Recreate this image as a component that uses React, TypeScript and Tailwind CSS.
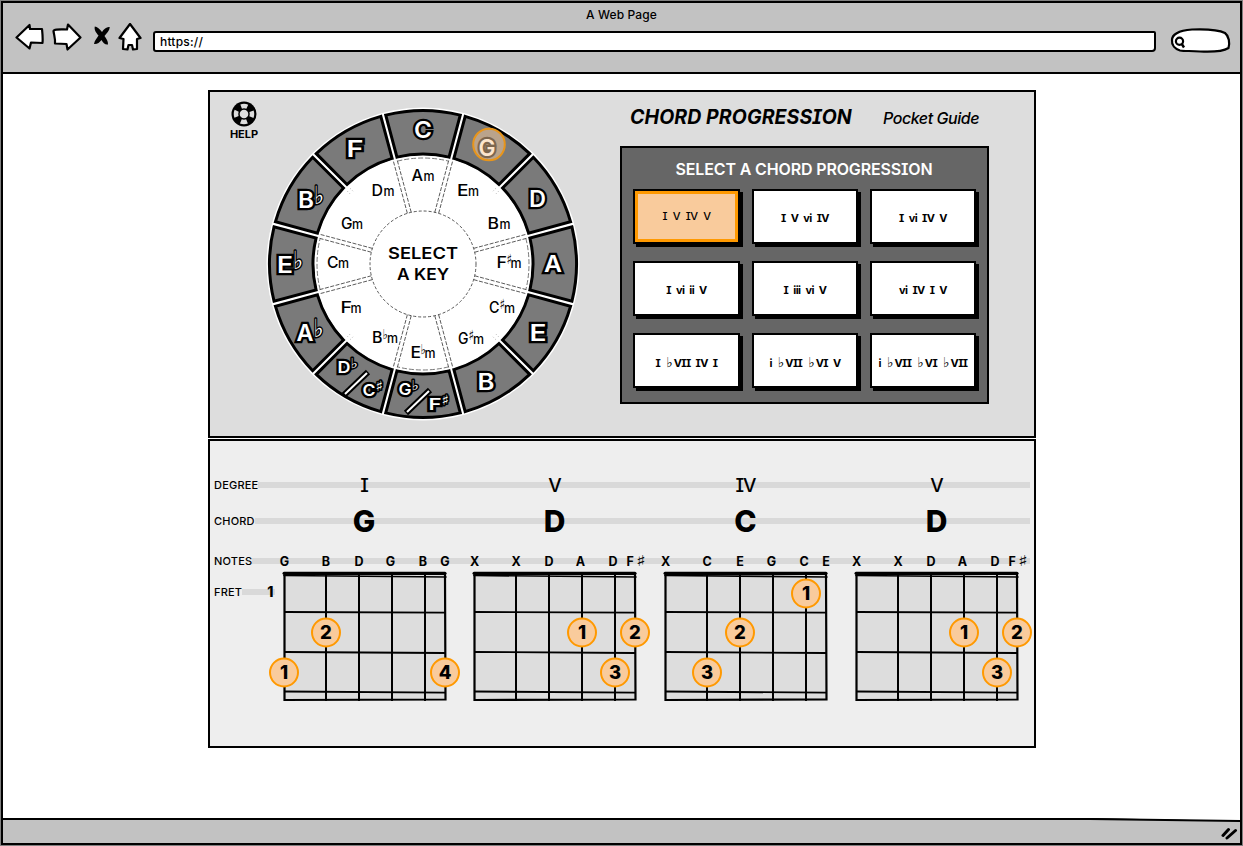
import React from "react";

const FONT = "font-['Inter','DejaVu_Sans',sans-serif] [font-feature-settings:'cv08']";

const progressions = [
  "I  V  IV  V",
  "I  V  vi  IV",
  "I  vi  IV  V",
  "I  vi  ii  V",
  "I  iii  vi  V",
  "vi  IV  I  V",
  "I  ♭VII  IV  I",
  "i  ♭VII  ♭VI  V",
  "i  ♭VII  ♭VI  ♭VII",
];

type Dot = { s: number; f: number; n: string };
type Chord = { degree: string; name: string; notes: string[]; dots: Dot[] };

const chords: Chord[] = [
  {
    degree: "I",
    name: "G",
    notes: ["G", "B", "D", "G", "B", "G"],
    dots: [
      { s: 1, f: 1, n: "2" },
      { s: 0, f: 2, n: "1" },
      { s: 5, f: 2, n: "4" },
    ],
  },
  {
    degree: "V",
    name: "D",
    notes: ["X", "X", "D", "A", "D", "F♯"],
    dots: [
      { s: 3, f: 1, n: "1" },
      { s: 5, f: 1, n: "2" },
      { s: 4, f: 2, n: "3" },
    ],
  },
  {
    degree: "IV",
    name: "C",
    notes: ["X", "C", "E", "G", "C", "E"],
    dots: [
      { s: 4, f: 0, n: "1" },
      { s: 2, f: 1, n: "2" },
      { s: 1, f: 2, n: "3" },
    ],
  },
  {
    degree: "V",
    name: "D",
    notes: ["X", "X", "D", "A", "D", "F♯"],
    dots: [
      { s: 3, f: 1, n: "1" },
      { s: 5, f: 1, n: "2" },
      { s: 4, f: 2, n: "3" },
    ],
  },
];

const strings = [0, 42, 75, 108, 141, 161];
const noteX = [0.5, 42, 75, 106.5, 139, 161];
const dotY = [21, 60, 100];

/* ---------- browser chrome ---------- */

function BrowserBar() {
  return (
    <header className="flex h-[71px] shrink-0 flex-col border-b-2 border-black bg-[#c2c2c2]">
      <div className="flex h-[20px] items-end justify-center pb-px text-[12px] font-medium leading-[15px]">
        <span className="tracking-[0.120px]">A Web Page</span>
      </div>
      <div className="flex h-[30px] pl-[12px]">
        <svg width="132" height="30" viewBox="15 23 132 30" className="shrink-0" fill="white" stroke="black" strokeWidth="2.200" strokeLinejoin="round">
          <path d="M16.500 37.500 L29.500 25 L30 29 L42 29 C42.500 34 43 38 42.500 43 L31 42.500 L29.500 48.500 Z" />
          <path d="M53.500 31 C54 29 60 29.500 67 29.500 L68 24.500 L80.500 37.500 L67.500 49.500 L66.500 44 L55 43.500 C55.500 39 54 35 53.500 31 Z" />
          <path
            d="M94.800 26.500 C97 26.500 100 29 102 32 C104 29 107 26.500 109.800 27.200 C109.500 30.500 106.500 33.500 104.500 36 C106.300 38.500 108.200 41 108 44.500 C105 45 103 42.500 101.500 40 C99.500 42.500 97 44.500 94 44 C94.500 40.500 97 38 98.500 35.500 C96 32.500 94 30 94.800 26.500 Z"
            fill="black"
            stroke="none"
          />
          <path d="M130 24 L140.500 38 L137 39 L137 49 L133 49.500 L132 45 L128.500 45 L127.500 49.500 L123 49 L123.500 39 L119.500 38 Z" />
        </svg>
        <div className="ml-[6px] mt-[8px] flex h-[21px] w-[1003px] shrink-0 items-center rounded-[3px_2px_4px_3px] border-2 border-black bg-white pl-[5px] text-[12px] font-medium leading-none tracking-[0.2px]">
          https://
        </div>
        <svg width="62" height="28" viewBox="1169 26 62 28" className="ml-[13px] mt-[3px] shrink-0" fill="white" stroke="black" strokeWidth="2.200">
          <path d="M1172 40 C1172 35 1178 30.500 1192 29.500 C1205 29 1218 29.500 1225 33 C1229 36 1230 43 1228.500 48 C1222 52 1210 52 1200 51.500 C1192 50.500 1185 51.500 1180 50.500 C1175 49 1171.500 45 1172 40 Z" />
          <circle cx="1179.500" cy="41.200" r="3.600" />
          <path d="M1181.500 43.500 L1184 47.500" strokeWidth="2.400" />
        </svg>
      </div>
    </header>
  );
}

function StatusBar() {
  return (
    <footer className="relative flex h-[25px] shrink-0 items-center justify-end border-t-2 border-black bg-[#c2c2c2] pr-[2px]">
      <svg className="absolute -top-[2px] right-0" width="150" height="6" viewBox="0 0 150 6">
        <path d="M0 0 H150 V3 L0 0 Z" fill="white" />
        <path d="M0 1 L150 3" stroke="black" strokeWidth="2" />
      </svg>
      <svg width="18" height="16" viewBox="0 0 18 16" stroke="black" strokeWidth="3" strokeLinecap="round">
        <path d="M3 11.500 L8.500 5.500 M7 14 L15.500 6.500" />
      </svg>
    </footer>
  );
}

/* ---------- key wheel ---------- */

const pt = (r: number, deg: number): [number, number] => {
  const a = (deg * Math.PI) / 180;
  return [r * Math.sin(a), -r * Math.cos(a)];
};

const segment = (mid: number) => {
  const gapOut = 0.95;
  const gapIn = 1.3;
  const [ax, ay] = pt(153.5, mid - 15 + gapOut);
  const [bx, by] = pt(153.5, mid + 15 - gapOut);
  const [cx, cy] = pt(110, mid + 15 - gapIn);
  const [dx, dy] = pt(110, mid - 15 + gapIn);
  return `M${ax} ${ay} A153.5 153.5 0 0 1 ${bx} ${by} L${cx} ${cy} A110 110 0 0 0 ${dx} ${dy} Z`;
};

type Label = { t: string; x: number; y: number; w: number; acc?: string; size?: number };

const majors: Label[] = [
  { t: "C", x: 0, y: -134, w: 20 },
  { t: "G", x: 64, y: -116, w: 19 },
  { t: "D", x: 114.500, y: -65, w: 19 },
  { t: "A", x: 130, y: 0, w: 20 },
  { t: "E", x: 115, y: 69, w: 19 },
  { t: "B", x: 63, y: 118, w: 19 },
  { t: "G", x: -18, y: 125, w: 15, acc: "♭", size: 16.5 },
  { t: "F", x: 12, y: 140, w: 15, acc: "♯", size: 16.5 },
  { t: "D", x: -79, y: 103, w: 15, acc: "♭", size: 16.5 },
  { t: "C", x: -54, y: 126, w: 15, acc: "♯", size: 16.5 },
  { t: "A", x: -118, y: 69, w: 19, acc: "♭" },
  { t: "E", x: -138, y: 1, w: 18, acc: "♭" },
  { t: "B", x: -117, y: -64, w: 18, acc: "♭" },
  { t: "F", x: -68, y: -115, w: 19 },
];

const minors: Label[] = [
  { t: "A", x: 0, y: -88, w: 23 },
  { t: "E", x: 45, y: -73, w: 22 },
  { t: "B", x: 76, y: -40, w: 23 },
  { t: "F", x: 86, y: -1, w: 25, acc: "♯" },
  { t: "C", x: 79, y: 44, w: 26, acc: "♯" },
  { t: "G", x: 48, y: 75, w: 26, acc: "♯" },
  { t: "E", x: 0, y: 89, w: 25, acc: "♭" },
  { t: "B", x: -38, y: 74, w: 26, acc: "♭" },
  { t: "F", x: -72, y: 44, w: 21 },
  { t: "C", x: -85, y: -1, w: 22 },
  { t: "G", x: -71, y: -40, w: 22 },
  { t: "D", x: -40, y: -73, w: 23 },
];

function KeyWheel() {
  const mids = Array.from({ length: 12 }, (_, i) => i * 30);
  const spokes = [15, 75, 105, 165, 195, 255, 285, 345];
  return (
    <svg width="314" height="314" viewBox="-157 -157 314 314" className="shrink-0 overflow-visible">
      <circle r="156.500" fill="white" />
      {mids.map((m) => (
        <path key={m} d={segment(m)} fill="#7a7a7a" stroke="black" strokeWidth="3" />
      ))}
      <circle r="108" fill="white" />
      {[0, 90, 180, 270].map((m) => {
        const [ax, ay] = pt(106, m - 14);
        const [bx, by] = pt(106, m + 14);
        return <path key={m} d={`M${ax} ${ay} A106 106 0 0 1 ${bx} ${by}`} fill="none" stroke="#555" strokeWidth="0.800" strokeDasharray="5 2" />;
      })}
      <circle r="53" fill="none" stroke="#444" strokeWidth="0.900" strokeDasharray="3 2" />
      {spokes.map((s) => (
        <g key={s} transform={`rotate(${s})`} stroke="#444" strokeWidth="0.800" strokeDasharray="4 1.500">
          <path d="M-2 -53 V-107 M2 -53 V-107" />
        </g>
      ))}
      {[45, 135, 225, 315].map((s) => (
        <g key={s} transform={`rotate(${s})`} stroke="#999" strokeWidth="0.700" strokeDasharray="1 2">
          <path d="M-2 -101 V-107 M2 -101 V-107" />
        </g>
      ))}
      <g strokeLinecap="butt">
        <path d="M-79 131 L-55 108" stroke="black" strokeWidth="6" />
        <path d="M-78 130 L-56 109" stroke="white" strokeWidth="2" />
        <path d="M-17 149 L7 126" stroke="black" strokeWidth="6" />
        <path d="M-16 148 L6 127" stroke="white" strokeWidth="2" />
      </g>
      <g fontFamily="Inter, 'DejaVu Sans', sans-serif" fontWeight="600" fill="white" stroke="black" strokeWidth="4.500" strokeLinejoin="miter" paintOrder="stroke">
        {majors.map((l, i) => (
          <g key={i}>
            <text x={l.x - l.w / 2 + 1} y={l.y + (l.size ?? 23) * 0.36} fontSize={l.size ?? 23} textLength={l.w - 2} lengthAdjust="spacingAndGlyphs">
              {l.t}
            </text>
            {l.acc && (
              <text
                x={l.x + l.w / 2 - 1}
                y={l.y + (l.size ? 1 : 4)}
                fontFamily="'DejaVu Sans'"
                fontWeight="700"
                fontSize={l.size ? 14 : 25}
                textLength={l.size ? 7.5 : 10}
                lengthAdjust="spacingAndGlyphs"
                strokeWidth="3"
              >
                {l.acc}
              </text>
            )}
          </g>
        ))}
      </g>
      <g fontFamily="Inter, 'DejaVu Sans', sans-serif" fontWeight="500" fill="black">
        {minors.map((l, i) => (
          <g key={i}>
            <text x={l.x - l.w / 2} y={l.y + 5} fontSize="15.500" textLength={l.acc ? 10.500 : 11.500} lengthAdjust="spacingAndGlyphs">
              {l.t}
            </text>
            {l.acc && (
              <text x={l.x - 2.500} y={l.y + 1} fontFamily="'DejaVu Sans'" fontSize="14" textLength="5.500" lengthAdjust="spacingAndGlyphs">
                {l.acc}
              </text>
            )}
            <text x={l.x + l.w / 2 - 11} y={l.y + 5} fontSize="13" textLength="11" lengthAdjust="spacingAndGlyphs">
              m
            </text>
          </g>
        ))}
        <text x="-35" y="-5.500" fontSize="15.500" fontWeight="600" textLength="70" lengthAdjust="spacingAndGlyphs">SELECT</text>
        <text x="-26" y="16" fontSize="15.500" fontWeight="600" textLength="52" lengthAdjust="spacingAndGlyphs">A KEY</text>
      </g>
      <circle cx="66" cy="-119.500" r="15.800" fill="#f9cb9c" fillOpacity="0.500" stroke="#e8951a" strokeWidth="2" />
    </svg>
  );
}

function Help() {
  return (
    <div className="flex w-[34px] shrink-0 flex-col items-center pt-[9px]">
      <svg width="26" height="26" viewBox="-13 -13 26 26">
        <circle r="12.500" fill="black" />
        <circle r="8" fill="none" stroke="#ddd" strokeWidth="4.500" strokeDasharray="6.283 6.283" strokeDashoffset="3.142" />
        <circle r="4.300" fill="#ddd" />
      </svg>
      <div className="text-[11px] font-bold leading-[14px]">HELP</div>
    </div>
  );
}

function Progression({ text }: { text: string }) {
  return (
    <span className="whitespace-pre [word-spacing:0.500px]">
      {text.split("♭").map((part, i) => (
        <React.Fragment key={i}>
          {i > 0 && <span className="ml-px mr-[1.500px] font-['DejaVu_Sans'] text-[14px] font-normal leading-none">♭</span>}
          {part}
        </React.Fragment>
      ))}
    </span>
  );
}

function ProgressionPicker() {
  return (
    <div className="flex h-[258px] w-[369px] flex-col border-2 border-black bg-[#666] pl-[11px]">
      <div className="flex h-[41px] items-center pr-[12px]">
        <h2 className="w-full whitespace-nowrap text-center text-[16px] font-semibold leading-none tracking-[-0.150px] text-white">
          SELECT A CHORD PROGRESSION
        </h2>
      </div>
      <div className="grid grid-cols-[107px_106px_106px] gap-x-[12px] gap-y-[17px]">
        {progressions.map((p, i) =>
          i === 0 ? (
            <button key={i} className="h-[55px] border-2 border-black bg-black text-[11px] shadow-[3px_3px_0_black]">
              <span className="flex h-full items-center justify-center border-[3px] border-[#ff9900] bg-[#f9cb9c] pb-px font-medium tracking-[-0.550px]">
                <Progression text={p} />
              </span>
            </button>
          ) : (
            <button
              key={i}
              className="flex h-[55px] items-center justify-center border-2 border-black bg-white pt-[3px] text-[11px] font-bold leading-none tracking-[-0.600px] shadow-[3px_3px_0_black]"
            >
              <Progression text={p} />
            </button>
          ),
        )}
      </div>
    </div>
  );
}

/* ---------- chord charts ---------- */

function Row({ label, className, children }: { label: string; className: string; children: React.ReactNode }) {
  return (
    <div className={`relative flex items-center pl-[4px] ${className}`}>
      <div className="absolute left-[4px] right-[4px] h-[6px] bg-[#d9d9d9]" />
      <div className="relative w-[55px] shrink-0 text-[11px] font-medium leading-none tracking-[0.200px]">
        <span className="bg-[#eee]">{label}</span>
      </div>
      <div className="relative grid shrink-0 grid-cols-[190px_191px_191px_191px]">{children}</div>
    </div>
  );
}

function Note({ note, x }: { note: string; x: number }) {
  if (note.length === 1) {
    return (
      <text x={x} y="15.500" textAnchor="middle">
        {note}
      </text>
    );
  }
  return (
    <>
      <text x={x - 8.5} y="15.500">
        {note[0]}
      </text>
      <text x={x + 1} y="15.500" fontFamily="'DejaVu Sans'" fontWeight="400" fontSize="15" textLength="10" lengthAdjust="spacingAndGlyphs">
        {note[1]}
      </text>
    </>
  );
}

function Fretboard({ dots }: { dots: Dot[] }) {
  return (
    <svg width="161" height="130" viewBox="0 0 161 130" className="overflow-visible" stroke="black" strokeLinecap="round">
      <path d="M0.500 2 L161 2 L161.500 127.500 L0.500 128 Z" fill="#ddd" strokeWidth="2.200" />
      <path d="M0 1.300 L161 1.300" strokeWidth="3" />
      <path d="M0 3.500 L162 5" strokeWidth="1.600" />
      <path d="M1 40 L161 40.700 M1 80 L161 81 M1 119.500 L161 120.700" strokeWidth="1.800" />
      {strings.slice(1, 5).map((x) => (
        <path key={x} d={`M${x} 0.500 V129`} strokeWidth="2" strokeLinecap="butt" />
      ))}
      {dots.map((d) => (
        <g key={`${d.s}-${d.f}`}>
          <circle cx={strings[d.s]} cy={dotY[d.f] + 0.500} r="14" fill="#f9cb9c" stroke="#ff9900" strokeWidth="2" />
          <text x={strings[d.s]} y={dotY[d.f] + 7} textAnchor="middle" fontSize="18.500" fontWeight="800" stroke="none" fill="black">
            {d.n}
          </text>
        </g>
      ))}
    </svg>
  );
}

function ChordCharts() {
  return (
    <section className="mt-px flex h-[309px] w-[828px] flex-col border-2 border-black bg-[#eee] pt-[29px]">
      <Row label="DEGREE" className="h-[30px]">
        {chords.map((c, i) => (
          <div key={i} className="text-center text-[19px] font-medium leading-none tracking-[-1px]">{c.degree}</div>
        ))}
      </Row>
      <Row label="CHORD" className="h-[42px]">
        {chords.map((c, i) => (
          <div key={i} className="pb-px text-center text-[30px] font-extrabold leading-none">{c.name}</div>
        ))}
      </Row>
      <Row label="NOTES" className="mt-[8px] h-[22px]">
        {chords.map((c, i) => (
          <svg key={i} width="161" height="22" className="ml-[15px] overflow-visible" fontSize="12.500" fontWeight="700">
            {c.notes.map((n, j) => (
              <Note key={j} note={n} x={noteX[j]} />
            ))}
          </svg>
        ))}
      </Row>
      <div className="flex pl-[4px]">
        <div className="relative flex h-[40px] w-[55px] shrink-0 items-center text-[11px] font-medium leading-none tracking-[0.200px]">
          <span className="shrink-0">FRET</span>
          <span className="h-[6px] w-[33px] shrink-0 bg-[#d9d9d9]" />
          <span className="-ml-[8px] shrink-0 text-[14px] font-extrabold">1</span>
        </div>
        <div className="grid shrink-0 grid-cols-[190px_191px_191px_191px]">
          {chords.map((c, i) => (
            <div key={i} className="pl-[15px]">
              <Fretboard dots={c.dots} />
            </div>
          ))}
        </div>
      </div>
    </section>
  );
}

export default function App() {
  return (
    <div className={`h-[846px] w-[1243px] overflow-hidden bg-[#808080] p-px text-black ${FONT}`}>
      <div className="flex h-full flex-col border-2 border-black bg-white">
        <BrowserBar />
        <main className="flex-1 pl-[205px] pt-[16px]">
          <section className="flex h-[348px] w-[828px] border-2 border-black bg-[#ddd]">
            <div className="flex w-[410px] shrink-0 pl-[17px]">
              <Help />
              <div className="ml-[5px] mt-[15px]">
                <KeyWheel />
              </div>
            </div>
            <div className="flex flex-col">
              <div className="flex h-[54px] items-center whitespace-nowrap pb-[2px] pl-[10px] italic leading-none">
                <h1 className="w-[253px] text-[19.500px] font-bold tracking-[0.100px]">CHORD PROGRESSION</h1>
                <p className="text-[16px] font-medium tracking-[-0.450px]">Pocket Guide</p>
              </div>
              <ProgressionPicker />
            </div>
          </section>
          <ChordCharts />
        </main>
        <StatusBar />
      </div>
    </div>
  );
}
